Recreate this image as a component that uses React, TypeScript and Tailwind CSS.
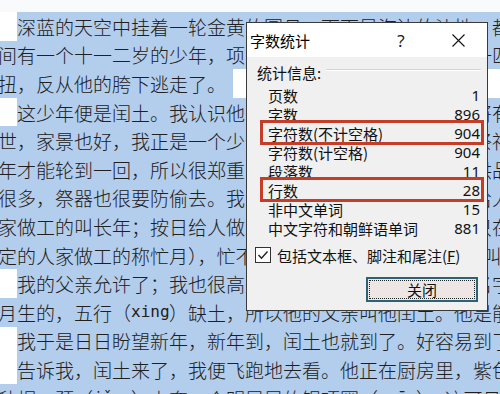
import React from "react";

const BLUE = "bg-[#b3cdec]";

type LineProps = {
  indent?: boolean;
  endWhite?: boolean;
  children: React.ReactNode;
};

function DocLine({ indent, endWhite, children }: LineProps) {
  return (
    <div className={`flex h-[28.6px] ml-[-21px] w-[540px] items-stretch whitespace-nowrap ${BLUE}`}>
      {indent && <span className="w-[38px] shrink-0 bg-white" />}
      <span className="flex items-center leading-none text-[19px] font-light text-[#202020]">{children}</span>
      {endWhite && <span className="w-[7px] shrink-0" />}
      {endWhite && <span className="flex-1 bg-white" />}
    </div>
  );
}

function Latin({ children, w }: { children: React.ReactNode; w: string }) {
  return (
    <span className={`inline-block ${w} text-center font-['DejaVu_Sans_Mono',monospace] text-[16px]`}>
      {children}
    </span>
  );
}

function Row({ label, value }: { label: string; value: string }) {
  return (
    <div className="flex h-[19px] items-center pl-[21px] pr-[7px] text-[15px] leading-none text-[#111]">
      <span className="flex-1">{label}</span>
      <span className="font-['Noto_Sans',sans-serif] text-[15px]">{value}</span>
    </div>
  );
}

export default function App() {
  return (
    <div className="relative w-[500px] h-[394px] overflow-hidden bg-white font-['Noto_Sans_CJK_SC','Noto_Sans',sans-serif]">
      <div className="h-[12px] bg-[#f9fafb]" />
      <DocLine indent>深蓝的天空中挂着一轮金黄的圆月，下面是海边的沙地，都</DocLine>
      <DocLine>其间有一个十一二岁的少年，项带银圈，手捏一柄钢叉，向一匹</DocLine>
      <DocLine endWhite>一扭，反从他的胯下逃走了。</DocLine>
      <DocLine indent>这少年便是闰土。我认识他时，也不过十多岁，离现在将有</DocLine>
      <DocLine>在世，家景也好，我正是一个少爷。那一年，我家是一件大祭祀</DocLine>
      <DocLine>多年才能轮到一回，所以很郑重；正月里供祖像，摆上许多供品</DocLine>
      <DocLine>也很多，祭器也很要防偷去。我家只有一个忙月（我们这里给人</DocLine>
      <DocLine>人家做工的叫长年；按日给人做工的叫短工；自己也种地，只在</DocLine>
      <DocLine>一定的人家做工的称忙月），忙不过来，他便对父亲说，可以叫</DocLine>
      <DocLine indent>我的父亲允许了；我也很高兴，因为我早听到闰土这个名字</DocLine>
      <DocLine>
        闰月生的，五行（<Latin w="w-[38px]">xing</Latin>）缺土，所以他的父亲叫他闰土。他是能
      </DocLine>
      <DocLine indent>我于是日日盼望新年，新年到，闰土也就到了。好容易到了</DocLine>
      <DocLine indent>告诉我，闰土来了，我便飞跑地去看。他正在厨房里，紫色</DocLine>
      <DocLine>
        小毡帽，颈（<Latin w="w-[38px]">jǐng</Latin>）上套一个明晃晃的银项圈（<Latin w="w-[38px]">quān</Latin>），这可见
      </DocLine>

      {/* Dialog */}
      <div className="absolute left-[246px] top-[22px] w-[242px] h-[289px] border border-[#3a3a3a] bg-[#f0f0f0] flex flex-col">
        <div className="flex h-[34px] items-center bg-white text-[15px] text-black">
          <span className="pl-[3px] leading-none">字数统计</span>
          <span className="flex-1" />
          <span className="w-[30px] text-center text-[17px] leading-none font-['Noto_Sans',sans-serif] text-[#222]">?</span>
          <span className="w-[19px]" />
          <span className="flex w-[46px] mr-[6px] items-center justify-center">
            <svg width="13" height="13" viewBox="0 0 13 13">
              <path d="M0.5 0.5 L12.5 12.5 M12.5 0.5 L0.5 12.5" stroke="#111" strokeWidth="1.1" />
            </svg>
          </span>
        </div>

        <div className="relative flex flex-col pt-[5px]">
          <div className="flex h-[20px] items-center pl-[10px] text-[15px] leading-none text-[#111]">
            <span>统计信息:</span>
            <span className="ml-[5px] mr-[6px] mt-[-5px] flex-1 border-t border-b border-t-[#d4d4d4] border-b-white" />
          </div>
          <div className="mt-[4px] flex flex-col">
            <Row label="页数" value="1" />
            <Row label="字数" value="896" />
            <Row label="字符数(不计空格)" value="904" />
            <Row label="字符数(计空格)" value="904" />
            <Row label="段落数" value="11" />
            <Row label="行数" value="28" />
            <Row label="非中文单词" value="15" />
            <Row label="中文字符和朝鲜语单词" value="881" />
          </div>

          <div className="mt-[9px] flex h-[16px] items-center pl-[8px] text-[15px] leading-none text-[#111]">
            <span className="flex h-[16px] w-[16px] items-center justify-center border border-[#333] bg-white">
              <svg width="12" height="12" viewBox="0 0 12 12">
                <path d="M1.5 6 L4.5 9.2 L10.5 2.5" fill="none" stroke="#222" strokeWidth="1.4" />
              </svg>
            </span>
            <span className="ml-[6px]">
              包括文本框、脚注和尾注(<span className="underline">F</span>)
            </span>
          </div>

          <div className="mt-[14px] flex justify-end pr-[9px]">
            <div className="flex h-[25px] w-[112px] items-center justify-center border-2 border-[#2d6274] bg-[#eee6e4] p-[1px]">
              <div className="flex h-full w-full items-center justify-center border border-dotted border-[#222] text-[15px] leading-none text-[#111]">
                关闭
              </div>
            </div>
          </div>

          {/* highlight boxes */}
          <div className="absolute left-[13px] top-[63px] h-[25px] w-[224px] border-[3px] border-[#c63d27]" />
          <div className="absolute left-[13px] top-[120px] h-[25px] w-[224px] border-[3px] border-[#c63d27]" />
        </div>
      </div>
    </div>
  );
}
